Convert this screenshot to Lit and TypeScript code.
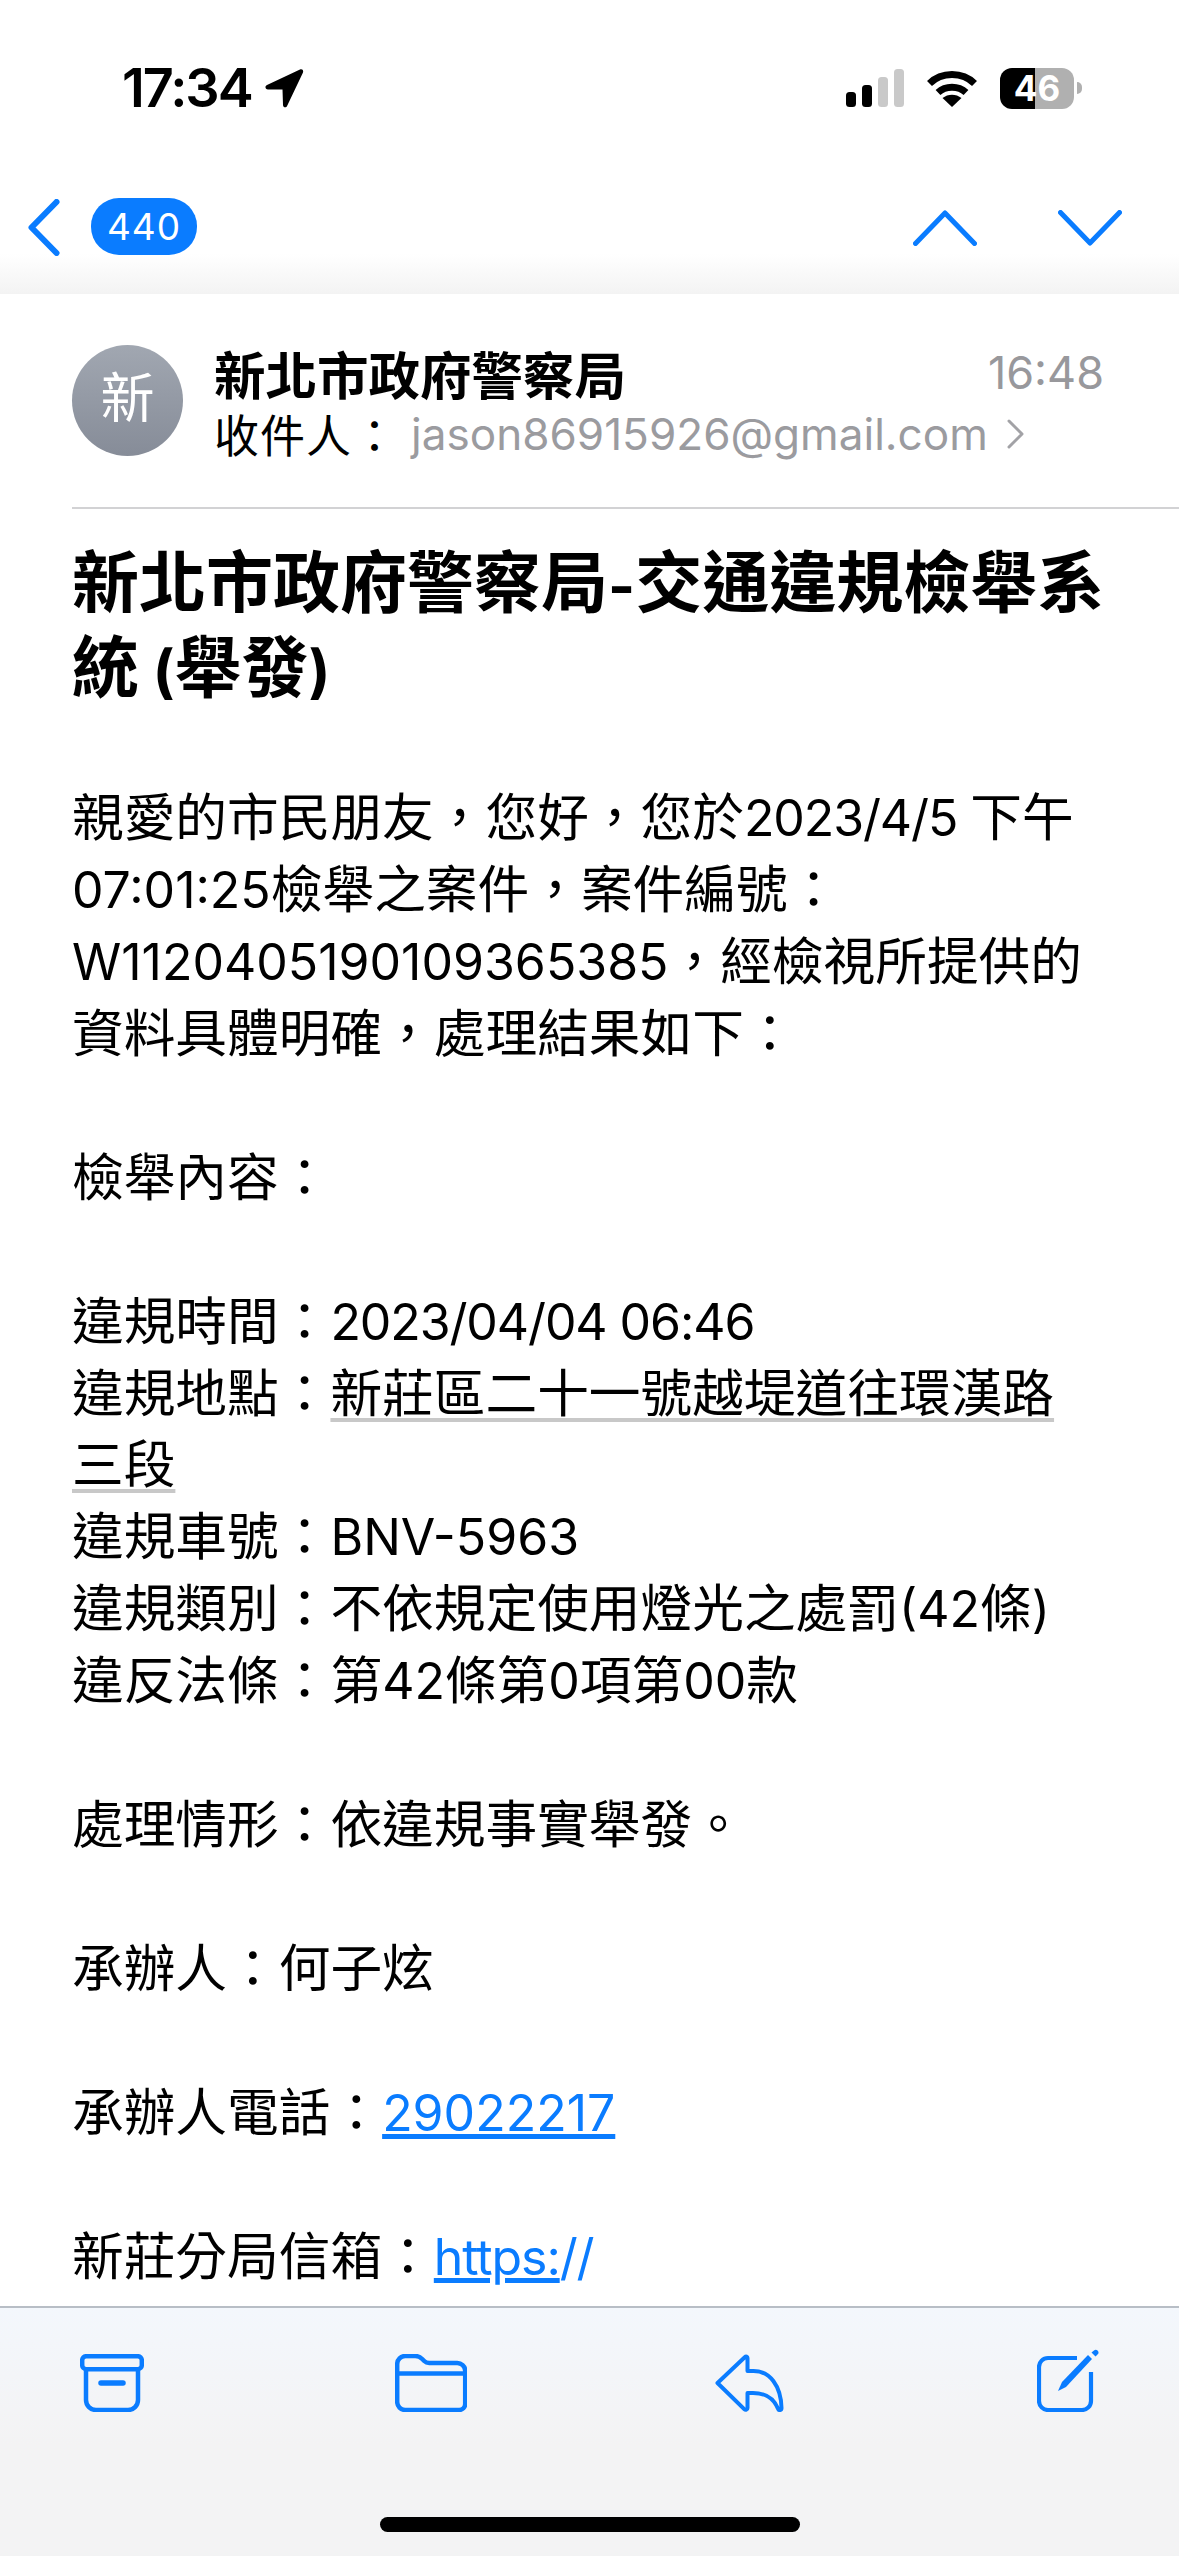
import { LitElement, html, css } from "lit";
import { customElement } from "lit/decorators.js";

const LATIN = /([\x20-\x7e]+)/;

/** Splits mixed text so that Latin runs get their own, smaller size than the CJK runs. */
function mixed(text: string, cls = "l") {
  return text
    .split(LATIN)
    .map((part) => (LATIN.test(part) ? html`<span class=${cls}>${part}</span>` : part));
}

@customElement("app-root")
export class AppRoot extends LitElement {
  static styles = css`
    :host { display: block; width: 1179px; height: 2556px; }
    * { box-sizing: border-box; }
    .page { position: relative; width: 1179px; height: 2556px; overflow: hidden; background: #fff; display: flex; flex-direction: column; color: #000;
      font-family: Inter, "Noto Sans CJK TC", sans-serif; }
    svg { display: block; flex: none; }
    .status { height: 176px; flex: none; display: flex; align-items: center; padding: 0 97px 0 122px; }
    .time { font-size: 54px; font-weight: 600; line-height: 60px; letter-spacing: -2px; width: 134px; }
    .arrow { margin-left: 8px; }
    .status-right { margin-left: auto; display: flex; align-items: center; }
    .wifi { margin-left: 23px; }
    .battery { margin-left: 23px; position: relative; width: 74px; height: 41px; border-radius: 12px; overflow: hidden;
      background: linear-gradient(90deg, #000 0 35px, #b0b0b0 35px); color: #fff; font-size: 35px; font-weight: 700; line-height: 41px; text-align: center; }
    .nub { width: 5px; height: 12px; margin-left: 3px; background: #b0b0b0; border-radius: 0 6px 6px 0; }
    .nav { height: 118px; flex: none; display: flex; align-items: flex-start; padding: 23px 57px 0 28px;
      background: linear-gradient(#fff 0 66%, #f3f3f3 100%); }
    .badge { margin-left: 31px; margin-top: -1px; width: 106px; height: 57px; border-radius: 28px; background: #0a7cff; color: #fff; font-size: 37px; line-height: 57px; text-align: center; letter-spacing: 1px; }
    .arrows { margin-left: auto; display: flex; gap: 81px; padding-top: 11px; }
    .content { flex: 1; min-height: 0; overflow: hidden; padding: 0 0 0 72px; }
    .head { display: flex; height: 215px; padding-top: 47px; border-bottom: 2px solid #d2d2d4; margin-bottom: 31px; position: relative; }
    .avatar { width: 111px; height: 111px; flex: none; margin-top: 4px; border-radius: 50%; background: linear-gradient(#a1a7b1, #868c98); color: #fff; font-size: 54px; font-weight: 400; line-height: 107px; text-align: center; }
    .who { margin-left: 31px; flex: 1; padding-right: 75px; }
    .sender-row { display: flex; justify-content: space-between; align-items: center; height: 62px; }
    .sender { font-size: 51.500px; font-weight: 700; }
    .stamp { font-size: 45px; color: #98989c; }
    .to { display: flex; align-items: center; height: 61px; }
    .to-label { font-size: 45px; width: 197px; flex: none; letter-spacing: 1px; }
    .mail { font-size: 44.100px; color: #9b9b9f; }
    .chev { margin-left: 18px; }
    .title { margin: 0 0 72px; font-size: 67px; font-weight: 700; width: 1060px; }
    .title-line { height: 85px; line-height: 85px; white-space: nowrap; }
    .t { font-size: 58px; }
    .body { font-size: 51.700px; width: 1080px; }
    .line { height: 71.950px; line-height: 71.950px; white-space: nowrap; }
    .l { font-size: 50px; }
    .tight { font-size: 50px; letter-spacing: -1.100px; }
    .u { text-decoration: underline; text-decoration-color: #c8c8c8; text-decoration-thickness: 4px; text-underline-offset: 6px; text-decoration-skip-ink: none; }
    a { color: #0a7cff; text-decoration: underline; text-decoration-thickness: 5px; text-underline-offset: 3px; }
    .plain { display: inline-block; }
    .toolbar { height: 250px; flex: none; border-top: 2px solid #b8bec6; background: linear-gradient(#f3f7fc, #f3f3f4 55%, #f3f3f4); display: flex; align-items: flex-start; justify-content: space-between; padding: 46px 78px 0 80px; }
    .reply { margin-left: -2px; margin-right: 2px; }
    .compose { margin-top: -5px; }
    .home { position: absolute; left: 380px; top: 2517px; width: 420px; height: 15px; border-radius: 8px; background: #000; }
  `;

  render() {
    const lines = [
      html`${mixed("親愛的市民朋友，您好，您於")}<span class="tight">2023/4/5 </span>下午`,
      mixed("07:01:25檢舉之案件，案件編號："),
      mixed("W1120405190109365385，經檢視所提供的"),
      "資料具體明確，處理結果如下：",
      "",
      "檢舉內容：",
      "",
      html`違規時間：<span class="tight">2023/04/04 06:46</span>`,
      html`違規地點：<span class="u">新莊區二十一號越堤道往環漢路</span>`,
      html`<span class="u">三段</span>`,
      mixed("違規車號：BNV-5963"),
      mixed("違規類別：不依規定使用燈光之處罰(42條)"),
      mixed("違反法條：第42條第0項第00款"),
      "",
      "處理情形：依違規事實舉發。",
      "",
      "承辦人：何子炫",
      "",
      html`承辦人電話：<a class="l" href="#">29022217</a>`,
      "",
      html`新莊分局信箱：<a class="tight" href="#">https:<span class="plain">//</span></a>`,
    ];
    return html`<div class="page">
      <div class="status">
        <div class="time">17:34</div>
        <svg class="arrow" width="40" height="40" viewBox="0 0 40 40"><path d="M36 1.500 3 17c-2.500 1.200-1.800 4.500 1 4.500h14.500l.5 15.500c.1 2.800 3.500 3.200 4.300.5L39 4.500C39.700 2 38 .6 36 1.500Z" fill="#000"/></svg>
        <div class="status-right">
          <svg width="58" height="38" viewBox="0 0 58 38">
            <rect x="0" y="23" width="10" height="15" rx="3.500" fill="#000"/>
            <rect x="16" y="16" width="10" height="22" rx="3.500" fill="#000"/>
            <rect x="32" y="8" width="10" height="30" rx="3.500" fill="#c9c9c9"/>
            <rect x="48" y="0" width="10" height="38" rx="3.500" fill="#c9c9c9"/>
          </svg>
          <svg class="wifi" width="50" height="38" viewBox="0 0 50 38">
            <path d="M2.500 14.500C14.500 2.500 35.500 2.500 47.500 14.500" fill="none" stroke="#000" stroke-width="7" stroke-linecap="butt"/>
            <path d="M11 23.500C18.500 16.500 31.500 16.500 39 23.500" fill="none" stroke="#000" stroke-width="7"/>
            <path d="M25 38 15.500 29C21 24.500 29 24.500 34.500 29Z" fill="#000"/>
          </svg>
          <div class="battery">46</div>
          <div class="nub"></div>
        </div>
      </div>
      <div class="nav">
        <svg width="32" height="57" viewBox="0 0 32 57"><path d="M28.500 3 3.500 28.500 28.500 54" fill="none" stroke="#0a7cff" stroke-width="6" stroke-linecap="round" stroke-linejoin="round"/></svg>
        <div class="badge">440</div>
        <div class="arrows">
          <svg width="64" height="36" viewBox="0 0 64 36"><path d="M2.500 33.500 32 3 61.500 33.500" fill="none" stroke="#0a7cff" stroke-width="5" stroke-linecap="round" stroke-linejoin="round"/></svg>
          <svg width="64" height="36" viewBox="0 0 64 36"><path d="M2.500 2.500 32 33 61.500 2.500" fill="none" stroke="#0a7cff" stroke-width="5" stroke-linecap="round" stroke-linejoin="round"/></svg>
        </div>
      </div>
      <div class="content">
        <div class="head">
          <div class="avatar">新</div>
          <div class="who">
            <div class="sender-row"><span class="sender">新北市政府警察局</span><span class="stamp">16:48</span></div>
            <div class="to">
              <span class="to-label">收件人：</span><span class="mail">jason86915926@gmail.com</span>
              <svg class="chev" width="19" height="32" viewBox="0 0 19 32"><path d="M3 3 16 16 3 29" fill="none" stroke="#a2a2a6" stroke-width="3" stroke-linecap="round" stroke-linejoin="round"/></svg>
            </div>
          </div>
        </div>
        <h1 class="title">
          <div class="title-line">${mixed("新北市政府警察局-交通違規檢舉系", "t")}</div>
          <div class="title-line">${mixed("統 (舉發)", "t")}</div>
        </h1>
        <div class="body">${lines.map((l) => html`<div class="line">${l}</div>`)}</div>
      </div>
      <div class="toolbar">
        <svg width="64" height="58" viewBox="0 0 64 58" fill="none" stroke="#0a7cff" stroke-width="4.500" stroke-linejoin="round">
          <rect x="2.200" y="2.200" width="59.600" height="13" rx="4"/>
          <path d="M6 15v31a10 10 0 0 0 10 10h32a10 10 0 0 0 10-10V15"/>
          <path d="M21 29h22" stroke-width="5.500" stroke-linecap="round"/>
        </svg>
        <svg width="72" height="58" viewBox="0 0 72 58" fill="none" stroke="#0a7cff" stroke-width="4.500" stroke-linejoin="round">
          <path d="M2.200 10a8 8 0 0 1 8-8h10c3.500 0 5 1 7 3l2 2c1.500 1.500 3 2 5 2h27.500a8 8 0 0 1 8.500 8v33a6 6 0 0 1-6 6H10a8 8 0 0 1-7.800-8Z"/>
          <path d="M2.200 19.500h67.600"/>
        </svg>
        <svg class="reply" width="69" height="58" viewBox="0 0 69 58" fill="none" stroke="#0a7cff" stroke-width="4" stroke-linejoin="round">
          <path d="M2.500 29 30 3c1-1 2.500-.5 2.500 1v13h6C55 17 66 32 66.500 54c0 2.500-2.800 2.800-3.500.6C58 43 50 39 38 39h-5.500v15c0 1.800-2 2.300-3 1.300Z"/>
        </svg>
        <svg class="compose" width="64" height="63" viewBox="0 0 64 63">
          <path d="M40 9H11a9 9 0 0 0-9 9v34a9 9 0 0 0 9 9h34a9 9 0 0 0 9-9V23" fill="none" stroke="#0a7cff" stroke-width="4.200" stroke-linecap="butt"/>
          <path d="M21 42l4-9L51 6l4 4-26 28Z" fill="#0a7cff"/>
          <path d="M57 1.500c1-1 2.500-1 3.500 0s1.500 2.500.5 3.500l-2.500 2.500-4-4Z" fill="#0a7cff"/>
        </svg>
      </div>
      <div class="home"></div>
    </div>`;
  }
}
